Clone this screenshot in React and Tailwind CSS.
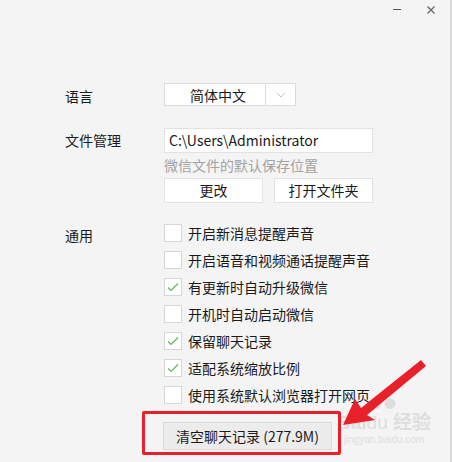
const font = { fontFamily: '"Noto Sans CJK SC", "Noto Sans", sans-serif' };

function Check() {
  return (
    <svg width="14" height="14" viewBox="0 0 14 14" fill="none">
      <path d="M2 7.5l3 3 7-7" stroke="#5cb85c" strokeWidth="1.2" />
    </svg>
  );
}

function Option({ checked, children }) {
  return (
    <div className="flex h-[27px] items-start">
      <span className="flex h-[18px] w-[18px] items-center justify-center border border-[#d6d6d6] bg-white">
        {checked && <Check />}
      </span>
      <span className="ml-[6px] -mt-[1px] text-[14px] leading-[20px] text-[#1a1a1a]">{children}</span>
    </div>
  );
}

function Arrow() {
  return (
    <svg className="pointer-events-none absolute left-0 top-0" width="452" height="462">
      <polygon
        points="343,425 355,399 361,408 421,360 426,366 367,415 375,420"
        fill="#e8202a"
      />
    </svg>
  );
}

export default function App() {
  return (
    <div
      className="relative h-[462px] w-[452px] overflow-hidden border-r-2 border-[#d9d9d9] bg-[#f4f4f4]"
      style={font}
    >
      {/* window controls */}
      <div className="flex h-[83px] items-start justify-end gap-[25px] pr-[14px] pt-[4px]">
        <span className="mt-[5px] h-px w-[8px] bg-[#555]" />
        <svg width="10" height="10" viewBox="0 0 10 10" className="mt-px">
          <path d="M1.5 1.5l7 7M8.5 1.5l-7 7" stroke="#666" strokeWidth="1.3" />
        </svg>
      </div>

      <div className="pl-[65px] text-[14px] text-[#1a1a1a]">
        {/* language */}
        <div className="flex h-[23px] items-center">
          <span className="w-[99px] translate-y-[2px]">语言</span>
          <div className="flex h-[23px] w-[132px] border border-[#dcdcdc] bg-white">
            <span className="flex w-[100px] items-center justify-center pl-[6px] leading-none">简体中文</span>
            <span className="flex flex-1 items-center justify-center border-l border-[#dcdcdc]">
              <svg width="10" height="6" viewBox="0 0 10 6" fill="none">
                <path d="M1 1l4 4 4-4" stroke="#c4c4c4" strokeWidth="1" />
              </svg>
            </span>
          </div>
        </div>

        {/* file management */}
        <div className="mt-[22px] flex">
          <span className="w-[99px] pt-[2px] leading-[20px]">文件管理</span>
          <div className="flex flex-col">
            <div className="flex h-[25px] w-[209px] items-center border border-[#e2e2e2] bg-white pl-[4px]">
              C:\Users\Administrator
            </div>
            <span className="mt-[1px] leading-[22px] text-[#a3a3a3]">微信文件的默认保存位置</span>
            <div className="mt-[2px] flex gap-[11px]">
              <button className="h-[25px] w-[99px] border border-[#e2e2e2] bg-white">更改</button>
              <button className="h-[25px] w-[99px] border border-[#e2e2e2] bg-white">打开文件夹</button>
            </div>
          </div>
        </div>

        {/* general */}
        <div className="mt-[21px] flex">
          <span className="w-[99px] pt-[1px] leading-[20px]">通用</span>
          <div className="flex flex-col">
            <Option>开启新消息提醒声音</Option>
            <Option>开启语音和视频通话提醒声音</Option>
            <Option checked>有更新时自动升级微信</Option>
            <Option>开机时自动启动微信</Option>
            <Option checked>保留聊天记录</Option>
            <Option checked>适配系统缩放比例</Option>
            <Option>使用系统默认浏览器打开网页</Option>
          </div>
        </div>

        <div className="mt-[9px] pl-[98px]">
          <button className="h-[28px] w-[169px] border border-[#dadada] bg-[#ececec] text-[14px]">
            清空聊天记录 (277.9M)
          </button>
        </div>
      </div>

      {/* annotation overlay */}
      <div className="pointer-events-none absolute left-[337px] top-[398px] flex flex-col items-center text-[#dedede]">
        <span className="text-[12px] leading-none tracking-[2px]">●●</span>
        <span className="text-[19px] font-bold leading-[22px]" style={{ fontFamily: '"Liberation Sans", sans-serif' }}>
          Bai<span className="font-normal">du</span> <span style={font}>经验</span>
        </span>
        <span className="text-[10px] leading-[12px]" style={{ fontFamily: '"Liberation Sans", sans-serif' }}>
          jingyan.baidu.com
        </span>
      </div>
      <div className="pointer-events-none absolute left-[142px] top-[411px] h-[44px] w-[199px] rounded-[2px] border-[3px] border-[#e8202a]" />
      <Arrow />
    </div>
  );
}
